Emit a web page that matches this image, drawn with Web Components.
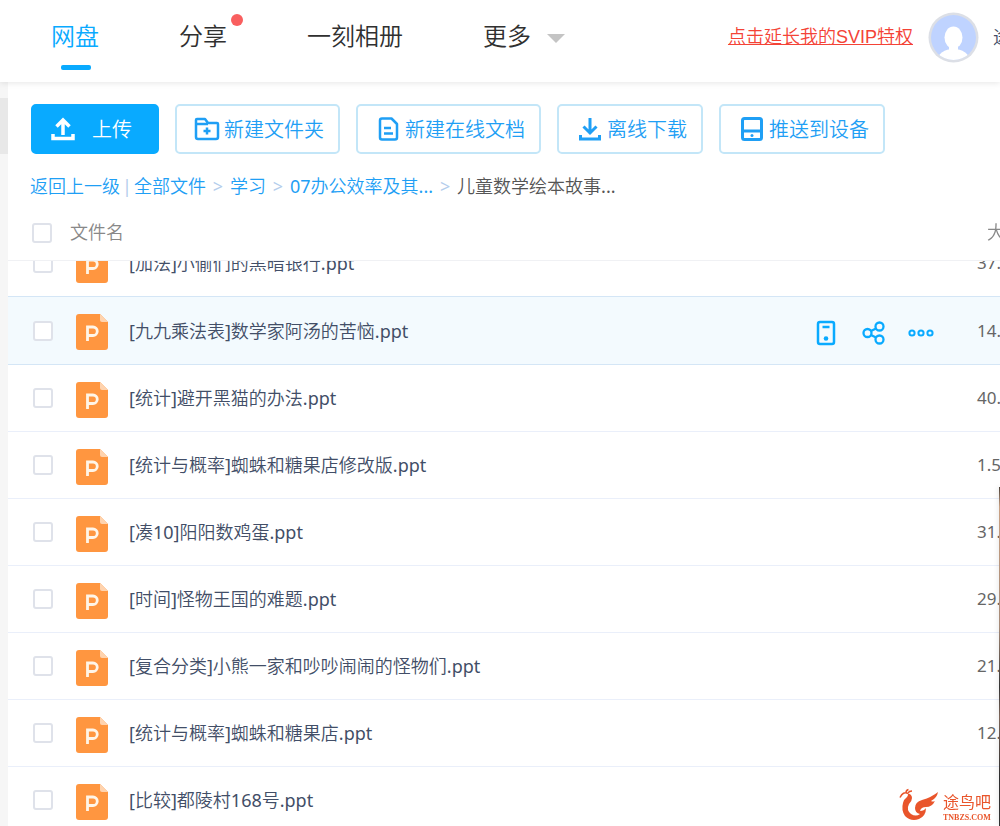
<!DOCTYPE html>
<html lang="zh-CN">
<head>
<meta charset="utf-8">
<title>网盘</title>
<style>
  html, body { margin: 0; height: 100%; overflow: hidden; }
  body { background: #fff; color: #424e67; font: 18px/28px "Noto Sans", "Noto Sans CJK SC DemiLight", "Noto Sans CJK SC", sans-serif; }
</style>
</head>
<body>
<disk-app></disk-app>

<template id="app-tpl">
  <style>
    :host { display: flex; flex-direction: column; height: 100vh; overflow: hidden; }
    .body { flex: 1; min-height: 0; display: flex; }
    .rail { flex: none; width: 8px; background: #f6f6f6; padding-top: 16px; box-sizing: border-box; }
    .rail i { display: block; height: 56px; background: #e8e8e8; }
    main { flex: 1; min-width: 0; display: flex; flex-direction: column; background: #fff; }
    .tools { display: flex; gap: 16px; padding: 22px 23px 0; }
    file-table { flex: 1; min-height: 0; }
    .edge { position: fixed; right: 0; bottom: 0; top: 487px; width: 1px; background: linear-gradient(#4a4038, #c9a184 20px, #a58a78 140px, #333 200px, #7d665a 230px, #2d2d2f 290px, #333); box-shadow: 0 0 5px rgba(0,0,0,.3); }
    site-mark { position: fixed; right: 9px; bottom: 3px; }
  </style>
  <disk-header></disk-header>
  <div class="body">
    <div class="rail"><i></i></div>
    <main>
      <div class="tools">
        <tool-button primary>
          <svg slot="icon" width="24" height="24" fill="none" stroke="currentColor" stroke-width="3.500"><path d="M12 18V4M5.500 9.500 12 3l6.500 6.500M2 17v4.500h20v-4.500"/></svg>上传</tool-button>
        <tool-button compact>
          <svg slot="icon" width="26" height="24" fill="none" stroke="currentColor" stroke-width="2.500" stroke-linejoin="round"><path d="M2 7V3q0-1 1-1h8l3 4h9q1 0 1 1v13q0 2-2 2H4q-2 0-2-2V7h12M13 10.500v7M9.500 14h7"/></svg>新建文件夹</tool-button>
        <tool-button>
          <svg slot="icon" width="21" height="24" fill="none" stroke="currentColor" stroke-width="2.500" stroke-linejoin="round"><path d="M4 1.500h9.500l5.500 5.500v13.500q0 2-2 2H4q-2 0-2-2v-17q0-2 2-2zM6 11h7M6 16.500h9"/></svg>新建在线文档</tool-button>
        <tool-button>
          <svg slot="icon" width="22" height="24" fill="none" stroke="currentColor" stroke-width="3"><path d="M11 1v15M4.500 9.500 11 16l6.500-6.500M1.500 18v4h19v-4"/></svg>离线下载</tool-button>
        <tool-button>
          <svg slot="icon" width="22" height="24" fill="none" stroke="currentColor" stroke-width="3"><rect x="1.500" y="1.500" width="19" height="21" rx="2"/><path d="M2 14h18"/><circle cx="11" cy="18.500" r="1.500" fill="currentColor" stroke="none"/></svg>推送到设备</tool-button>
      </div>
      <path-trail></path-trail>
      <file-table></file-table>
    </main>
  </div>
  <div class="edge"></div>
  <site-mark></site-mark>
</template>

<template id="header-tpl">
  <style>
    :host { display: flex; justify-content: space-between; align-items: flex-start; height: 82px; box-sizing: border-box; padding-left: 51px; background: #fff; box-shadow: 0 1px 6px rgba(0,0,0,.1); position: relative; z-index: 2; overflow-x: clip; }
    a { color: inherit; text-decoration: none; white-space: nowrap; }
    nav { display: flex; gap: 80px; padding-top: 18px; font-size: 24px; line-height: 36px; color: #303030; }
    nav a { position: relative; }
    .on { color: #09aaff; }
    .on::after { content: ""; position: absolute; left: 10px; right: 8px; top: 47px; height: 5px; border-radius: 2px; background: #09aaff; }
    .dot::after { content: ""; position: absolute; right: -16px; top: -4px; width: 12px; height: 12px; border-radius: 50%; background: #f95f5f; }
    .more { display: flex; align-items: center; gap: 16px; }
    .more::after { content: ""; border: 9px solid transparent; border-top-color: #c4c4c4; border-bottom: 0; margin-top: 4px; }
    .user { display: flex; align-items: center; height: 74px; }
    .vip { color: #f44336; text-decoration: underline; font-family: "Liberation Sans", "Noto Sans CJK SC DemiLight", "Noto Sans CJK SC", sans-serif; margin-right: 15px; }
    svg { display: block; margin-right: 14px; }
    .name { width: 7px; }
  </style>
  <nav>
    <a class="on" href="#">网盘</a><a class="dot" href="#">分享</a><a href="#">一刻相册</a><a class="more" href="#">更多</a>
  </nav>
  <div class="user">
    <a class="vip" href="#">点击延长我的SVIP特权</a>
    <svg width="51" height="51" viewBox="0 0 51 51"><defs><clipPath id="c"><circle cx="25.500" cy="25.500" r="22.500"/></clipPath></defs><circle cx="25.500" cy="25.500" r="25" fill="#dcdfe6"/><g clip-path="url(#c)"><path fill="#bfd3ff" d="M0 0h51v51H0z"/><ellipse cx="25.500" cy="48" rx="16" ry="11" fill="#fff"/><path fill="#fff" d="M21 33h9v8h-9z"/><ellipse cx="25.500" cy="25.500" rx="9" ry="11" fill="#fff"/></g></svg>
    <a class="name" href="#">途</a>
  </div>
</template>

<template id="button-tpl">
  <style>
    :host { display: block; flex: none; }
    button { display: flex; align-items: center; gap: 6px; height: 50px; box-sizing: border-box; padding: 0 14px 0 20px; border: 2px solid #c3e6f8; border-radius: 5px; background: #fff; color: #1f9ff5; font: inherit; font-size: 20px; white-space: nowrap; cursor: pointer; }
    span { padding-top: 2px; }
    :host([compact]) button { padding-left: 17px; gap: 4px; }
    :host([primary]) button { background: #09aaff; border-color: #09aaff; color: #fff; gap: 17px; padding: 0 25px 0 18px; }
  </style>
  <button type="button"><slot name="icon"></slot><span><slot></slot></span></button>
</template>

<template id="trail-tpl">
  <style>
    :host { display: flex; padding: 18px 22px 6px; white-space: nowrap; color: #555; }
    a { color: #1f9ff5; text-decoration: none; }
    i { font-style: normal; color: #b4cdec; width: 24px; text-align: center; }
    i.bar { width: 14px; }
  </style>
  <a href="#">返回上一级</a><i class="bar">|</i><a href="#">全部文件</a><i>&gt;</i><a href="#">学习</a><i>&gt;</i><a href="#">07办公效率及其...</a><i>&gt;</i><span>儿童数学绘本故事...</span>
</template>

<template id="table-tpl">
  <style>
    :host { display: block; overflow: hidden; }
    table { width: 100%; table-layout: fixed; border-spacing: 0; }
    th, td { padding: 0; text-align: left; font-weight: inherit; white-space: nowrap; box-sizing: border-box; border-bottom: 1px solid #eaeffa; height: 67px; }
    th { position: sticky; top: 0; z-index: 1; height: 55px; background: #fff; color: #888; border-color: #f0f1f4; }
    .c { width: 62px; padding-left: 25px; }
    th.c { padding-left: 24px; }
    .i { width: 59px; padding: 3px 0 0 6px; }
    th.i { padding: 0 0 2px; }
    .a { width: 161px; }
    .s { width: 23px; color: #666; font-size: 17px; }
    th.s { padding: 0 0 2px 10px; color: #888; font-size: 18px; }
    tr:has(+ .hover) td { border-bottom-color: #d4e6f6; }
    tr.hover td { height: 68px; background: #f3fafe; border-bottom-color: #d4e6f6; }
    input { appearance: none; display: block; box-sizing: border-box; margin: 0; width: 20px; height: 20px; border: 2px solid #dfe2ea; border-radius: 3px; background: #fff; }
    svg { display: block; }
    .acts { display: flex; align-items: center; gap: 26px; padding-top: 4px; color: #09aaff; }
    button { padding: 0; border: 0; background: none; color: inherit; cursor: pointer; }
    .acts button:last-child { margin-left: -4px; }
    a { color: inherit; text-decoration: none; }
  </style>
  <table>
    <thead><tr><th class="c"><input type="checkbox" aria-label="全选"></th><th class="i">文件名</th><th></th><th class="a"></th><th class="s">大</th></tr></thead>
    <tbody></tbody>
  </table>
</template>

<template id="row-tpl">
  <tr>
    <td class="c"><input type="checkbox"></td>
    <td class="i"><svg width="32" height="36"><path d="M3 0h21l8 8v25q0 3-3 3H3q-3 0-3-3V3q0-3 3-3z" fill="#ff9640"/><path d="M24 0l8 8h-6q-2 0-2-2z" fill="#ffd3ae"/><path d="M11.500 27V13h5.500a4.200 4.200 0 0 1 0 8.500h-5.500" fill="none" stroke="#fff5e8" stroke-width="2.800"/></svg></td>
    <td class="n"><a href="#"></a></td>
    <td class="a"></td>
    <td class="s"></td>
  </tr>
</template>

<template id="acts-tpl">
  <div class="acts">
    <button aria-label="设备"><svg width="20" height="26" fill="none" stroke="currentColor" stroke-width="2.500"><rect x="2" y="2" width="16" height="22" rx="2"/><path d="M6.500 7h7"/><circle cx="10" cy="18.500" r="2.300" fill="currentColor" stroke="none"/></svg></button>
    <button aria-label="分享"><svg width="24" height="24" fill="none" stroke="currentColor" stroke-width="2.300"><circle cx="5.500" cy="12" r="4"/><circle cx="17.500" cy="5.500" r="4"/><circle cx="17.500" cy="18.500" r="4"/><path d="M9 10l5-2.500M9 14l5 2.500"/></svg></button>
    <button aria-label="更多操作"><svg width="26" height="10" fill="none" stroke="currentColor" stroke-width="2"><circle cx="4" cy="5" r="2.600"/><circle cx="13" cy="5" r="2.600"/><circle cx="22" cy="5" r="2.600"/></svg></button>
  </div>
</template>

<template id="mark-tpl">
  <style>
    :host { display: flex; align-items: center; gap: 2px; color: #e9552b; }
    .t { display: flex; flex-direction: column; font: 400 16px/24px "Noto Sans CJK SC", sans-serif; }
    small { font: bold 8px/9px "Liberation Serif", serif; }
    svg { display: block; }
  </style>
  <svg width="42" height="36" viewBox="0 0 42 36"><path fill="none" stroke="#e9552b" stroke-width="1.500" d="M1 10.500Q4 4 9 6.500M7 6Q7 3 9.500 2.500M9 6q1-2 4-2"/><path fill="#e9552b" d="M8 6q5 1 5 5 0 3-3 6-3 6 2 10 5 3 9 0-5-1-5-6 0-6 7-8 10-3 16-8-1 6-7 9 2 1 4 0-3 6-9 6-5 0-6 4 4 0 6-3 0 8-7 11-8 3-14-3-4-6-2-13 1-4 4-6 2-3 0-4z"/></svg>
  <div class="t"><span>途鸟吧</span><small>TNBZS.COM</small></div>
</template>

<script>
  const define = (name, tpl, setup) => customElements.define(name, class extends HTMLElement {
    constructor() {
      super();
      this.attachShadow({ mode: "open" }).append(document.getElementById(tpl).content.cloneNode(true));
    }
    connectedCallback() { if (setup) setup(this, this.shadowRoot); }
  });

  const files = [
    ["[加法]小偷们的黑暗银行.ppt", "37."],
    ["[九九乘法表]数学家阿汤的苦恼.ppt", "14."],
    ["[统计]避开黑猫的办法.ppt", "40."],
    ["[统计与概率]蜘蛛和糖果店修改版.ppt", "1.5"],
    ["[凑10]阳阳数鸡蛋.ppt", "31."],
    ["[时间]怪物王国的难题.ppt", "29."],
    ["[复合分类]小熊一家和吵吵闹闹的怪物们.ppt", "21."],
    ["[统计与概率]蜘蛛和糖果店.ppt", "12."],
    ["[比较]都陵村168号.ppt", ""]
  ];
  const hovered = 1;
  const scrolled = 31;

  define("disk-header", "header-tpl");
  define("tool-button", "button-tpl");
  define("path-trail", "trail-tpl");
  define("site-mark", "mark-tpl");
  define("file-table", "table-tpl", (host, root) => {
    const body = root.querySelector("tbody");
    files.forEach(([name, size], i) => {
      const row = document.getElementById("row-tpl").content.cloneNode(true);
      row.querySelector("a").textContent = name;
      row.querySelector("input").setAttribute("aria-label", name);
      row.querySelector(".s").textContent = size;
      if (i === hovered) {
        row.querySelector("tr").className = "hover";
        row.querySelector(".a").append(document.getElementById("acts-tpl").content.cloneNode(true));
      }
      body.append(row);
    });
    host.scrollTop = scrolled;
  });
  define("disk-app", "app-tpl");
</script>
</body>
</html>
